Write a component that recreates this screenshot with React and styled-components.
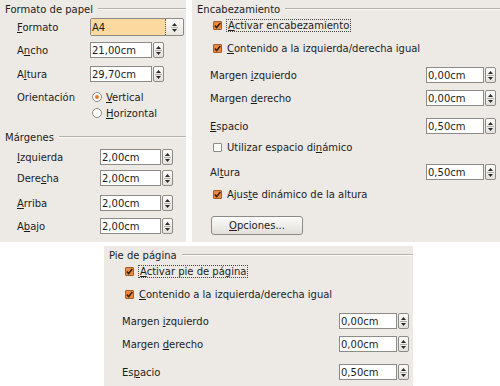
import React from 'react';
import styled, { createGlobalStyle } from 'styled-components';

const GlobalStyle = createGlobalStyle`
  html, body {
    margin: 0;
    padding: 0;
    background: #fff;
  }
  body {
    font-family: "DejaVu Sans", sans-serif;
    font-size: 10px;
    color: #1c1c1c;
  }
`;

const Page = styled.div`
  width: 500px;
  height: 386px;
  overflow: hidden;
  display: flex;
  flex-direction: column;
  gap: 4px;
`;

const TopRow = styled.div`
  display: flex;
  gap: 6px;
  height: 242px;
`;

const Panel = styled.div`
  background: #edeae6;
  width: ${(p) => p.$w}px;
  height: ${(p) => p.$h}px;
  margin-left: ${(p) => p.$ml || 0}px;
  padding: 1px 0 0 5px;
  box-sizing: border-box;
  flex: none;
`;

const FrameTitle = styled.div`
  display: flex;
  align-items: center;
  gap: 5px;
  height: 16px;
  margin-top: ${(p) => p.$mt || 0}px;
  white-space: nowrap;

  &::after {
    content: "";
    flex: 1;
    height: 0;
    border-top: 1px solid #b6b2ac;
    border-bottom: 1px solid #fbfaf9;
  }
`;

const Row = styled.div`
  display: flex;
  align-items: center;
  height: ${(p) => p.$h || 16}px;
  margin-top: ${(p) => p.$mt || 0}px;
  padding-left: ${(p) => p.$pl || 0}px;
  padding-right: ${(p) => p.$pr || 0}px;
  white-space: nowrap;
`;

const Label = styled.span`
  width: ${(p) => p.$w}px;
  flex: none;
`;

const U = styled.span`
  text-decoration: underline;
  text-underline-offset: 1px;
`;

const Spin = styled.div`
  display: flex;
  gap: 1px;
  height: 16px;
  margin-left: ${(p) => (p.$right ? 'auto' : '0')};
`;

const Entry = styled.div`
  width: ${(p) => p.$w}px;
  box-sizing: border-box;
  border: 1px solid #8e8b86;
  background: #fff;
  padding-left: 1px;
  display: flex;
  align-items: center;
`;

const SpinButton = styled.div`
  width: 11px;
  box-sizing: border-box;
  border: 1px solid #8e8b86;
  border-radius: 2px;
  background: linear-gradient(#fdfcfb, #e4e1dd);
  display: flex;
  align-items: center;
  justify-content: center;
`;

const Combo = styled.div`
  display: flex;
  width: 94px;
  height: 18px;
  box-sizing: border-box;
  border: 1px solid #8e8b86;
  border-radius: 2px;
  background: linear-gradient(#fdfcfb, #e8e5e1);
`;

const ComboEntry = styled.div`
  flex: 1;
  background: #fcd99f;
  padding-left: 1px;
  display: flex;
  align-items: center;
  border-right: 1px dotted #6b5a44;
`;

const ComboButton = styled.div`
  width: 17px;
  display: flex;
  align-items: center;
  justify-content: center;
`;

const CheckRow = styled(Row)`
  gap: 5px;
`;

const Box = styled.span`
  width: 9px;
  height: 9px;
  box-sizing: border-box;
  border: 1px solid ${(p) => (p.$on ? '#a55e2a' : '#8e8b86')};
  background: ${(p) => (p.$on ? '#ec8b40' : '#fff')};
  border-radius: 1px;
  display: flex;
  align-items: center;
  justify-content: center;
  flex: none;
`;

const Focus = styled.span`
  outline: 1px dotted #444;
  outline-offset: 0;
  padding: 0 1px;
`;

const Radio = styled.span`
  width: 10px;
  height: 10px;
  box-sizing: border-box;
  border-radius: 50%;
  border: 1px solid #8e8b86;
  background: #fff;
  margin-left: 2px;
  margin-right: 4px;
  display: flex;
  align-items: center;
  justify-content: center;
  flex: none;

  &::after {
    content: "";
    display: ${(p) => (p.$on ? 'block' : 'none')};
    width: 4px;
    height: 4px;
    border-radius: 50%;
    background: #e07a2c;
  }
`;

const Button = styled.div`
  width: 92px;
  height: 19px;
  box-sizing: border-box;
  border: 1px solid #8e8b86;
  border-radius: 3px;
  background: linear-gradient(#fdfcfb, #e2dfda);
  display: flex;
  align-items: center;
  justify-content: center;
`;

const Arrows = () => (
  <svg width="7" height="12" viewBox="0 0 7 12">
    <path d="M3.5 2 L6 5 L1 5 Z" fill="#2a2a2a" />
    <line x1="0" y1="6.5" x2="7" y2="6.5" stroke="#b2aea8" strokeWidth="1" />
    <path d="M1 8 L6 8 L3.5 11 Z" fill="#2a2a2a" />
  </svg>
);

const Tick = () => (
  <svg width="7" height="7" viewBox="0 0 7 7">
    <path d="M0.8 3.6 L2.7 5.6 L6.3 0.9" fill="none" stroke="#3a2412" strokeWidth="1.6" />
  </svg>
);

const Check = ({ on, children }) => (
  <Box $on={on}>{on && <Tick />}</Box>
);

const Field = ({ value, w = 62, right }) => (
  <Spin $right={right}>
    <Entry $w={w}>{value}</Entry>
    <SpinButton>
      <Arrows />
    </SpinButton>
  </Spin>
);

const HeaderFooter = ({ title, activate, extra }) => (
  <>
    <FrameTitle>{title}</FrameTitle>
    <CheckRow $pl={16}>
      <Check on />
      <Focus>{activate}</Focus>
    </CheckRow>
    <CheckRow $pl={16} $mt={7}>
      <Check on />
      <span>
        <U>C</U>ontenido a la izquierda/derecha igual
      </span>
    </CheckRow>
    <Row $pl={13} $pr={4} $mt={11}>
      <span>
        Margen <U>i</U>zquierdo
      </span>
      <Field value="0,00cm" w={58} right />
    </Row>
    <Row $pl={13} $pr={4} $mt={7}>
      <span>
        Margen <U>d</U>erecho
      </span>
      <Field value="0,00cm" w={58} right />
    </Row>
    <Row $pl={13} $pr={4} $mt={12}>
      {extra ? (
        <span>
          <U>E</U>spacio
        </span>
      ) : (
        <span>
          Es<U>p</U>acio
        </span>
      )}
      <Field value="0,50cm" w={58} right />
    </Row>
    {extra}
  </>
);

const HeaderExtra = (
  <>
    <CheckRow $pl={16} $mt={5}>
      <Check />
      <span>
        Utilizar espacio di<U>n</U>ámico
      </span>
    </CheckRow>
    <Row $pl={13} $pr={4} $mt={9}>
      <span>
        Al<U>t</U>ura
      </span>
      <Field value="0,50cm" w={58} right />
    </Row>
    <CheckRow $pl={16} $mt={6}>
      <Check on />
      <span>
        Ajus<U>t</U>e dinámico de la altura
      </span>
    </CheckRow>
    <Row $pl={14} $mt={14} $h={19}>
      <Button>
        <span>
          <U>O</U>pciones...
        </span>
      </Button>
    </Row>
  </>
);

const App = () => (
  <Page>
    <GlobalStyle />
    <TopRow>
      <Panel $w={186} $h={242}>
        <FrameTitle>Formato de papel</FrameTitle>
        <Row $pl={12} $h={18} $mt={1}>
          <Label $w={73}>
            <U>F</U>ormato
          </Label>
          <Combo>
            <ComboEntry>A4</ComboEntry>
            <ComboButton>
              <Arrows />
            </ComboButton>
          </Combo>
        </Row>
        <Row $pl={12} $mt={6}>
          <Label $w={73}>
            A<U>n</U>cho
          </Label>
          <Field value="21,00cm" />
        </Row>
        <Row $pl={12} $mt={8}>
          <Label $w={73}>
            A<U>l</U>tura
          </Label>
          <Field value="29,70cm" />
        </Row>
        <Row $pl={12} $mt={7}>
          <Label $w={73}>Orientación</Label>
          <Radio $on />
          <span>
            <U>V</U>ertical
          </span>
        </Row>
        <Row $pl={12}>
          <Label $w={73} />
          <Radio />
          <span>
            <U>H</U>orizontal
          </span>
        </Row>
        <FrameTitle $mt={8}>Márgenes</FrameTitle>
        <Row $pl={12} $mt={4}>
          <Label $w={83}>
            <U>I</U>zquierda
          </Label>
          <Field value="2,00cm" w={61} />
        </Row>
        <Row $pl={12} $mt={5}>
          <Label $w={83}>
            Dere<U>c</U>ha
          </Label>
          <Field value="2,00cm" w={61} />
        </Row>
        <Row $pl={12} $mt={9}>
          <Label $w={83}>
            <U>A</U>rriba
          </Label>
          <Field value="2,00cm" w={61} />
        </Row>
        <Row $pl={12} $mt={7}>
          <Label $w={83}>
            A<U>b</U>ajo
          </Label>
          <Field value="2,00cm" w={61} />
        </Row>
      </Panel>
      <Panel $w={308} $h={242}>
        <HeaderFooter
          title="Encabezamiento"
          activate={
            <>
              <U>A</U>ctivar encabezamiento
            </>
          }
          extra={HeaderExtra}
        />
      </Panel>
    </TopRow>
    <Panel $w={309} $h={140} $ml={104}>
      <HeaderFooter
        title="Pie de página"
        activate={
          <>
            <U>A</U>ctivar pie de página
          </>
        }
      />
    </Panel>
  </Page>
);

export default App;
